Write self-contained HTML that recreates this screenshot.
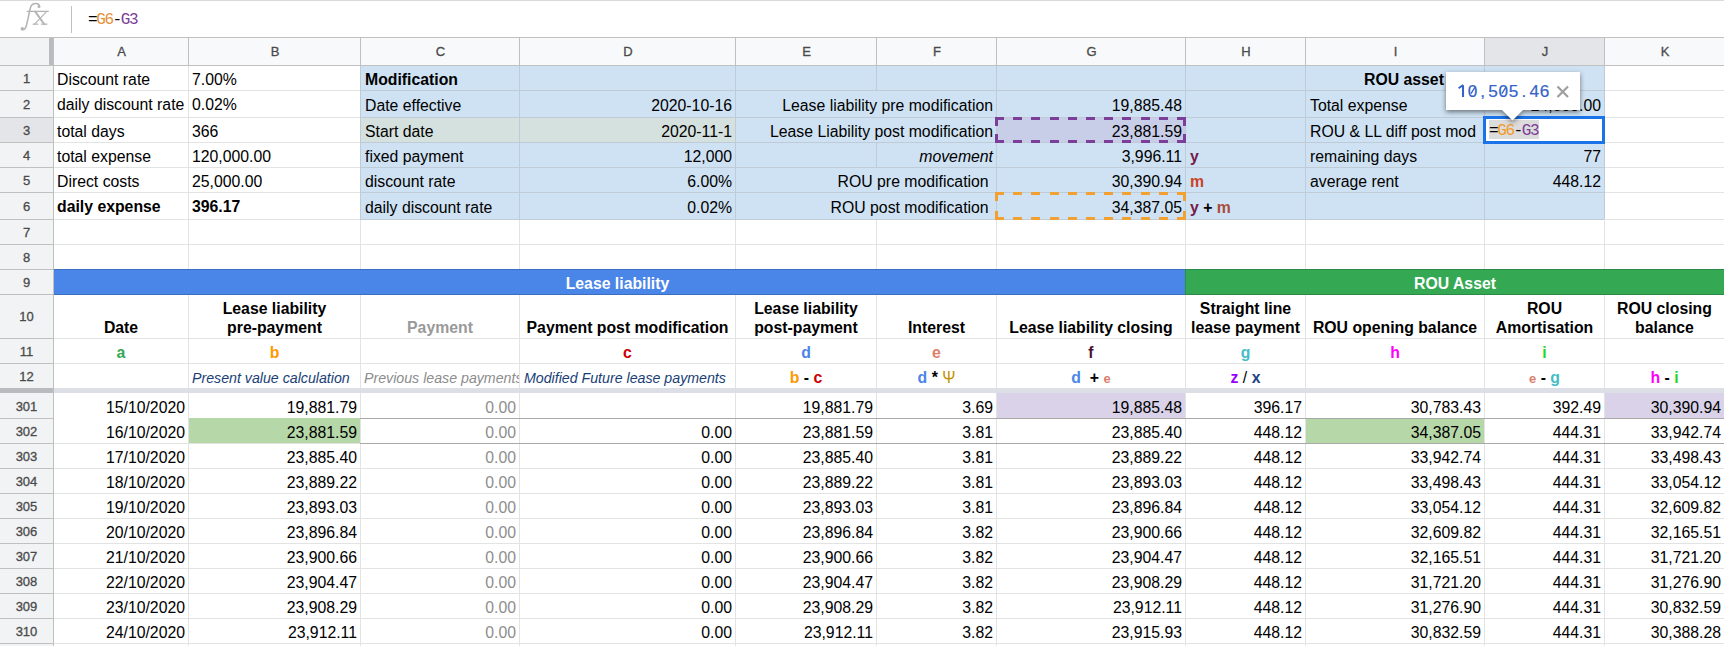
<!DOCTYPE html>
<html><head><meta charset="utf-8"><style>
html,body{margin:0;padding:0;background:#fff;width:1724px;height:646px;overflow:hidden;position:relative}
.a{position:absolute}
.t{position:absolute;font-family:"Liberation Sans",sans-serif;font-size:15.8px;line-height:20px;height:20px;white-space:nowrap;color:#000}
.h{position:absolute;font-family:"Liberation Sans",sans-serif;font-size:13px;color:#4a4a4a;-webkit-text-stroke:0.3px #4a4a4a}
.mono{font-family:"Liberation Mono",monospace;white-space:nowrap}
</style></head><body>
<div class="a" style="left:360px;top:65px;width:1244px;height:154px;background:#cfe2f3;"></div>
<div class="a" style="left:360px;top:117px;width:375px;height:25px;background:#d5e1de;"></div>
<div class="a" style="left:53px;top:269px;width:1132px;height:25px;background:#4a86e8;"></div>
<div class="a" style="left:1185px;top:269px;width:539px;height:25px;background:#34a853;"></div>
<div class="a" style="left:188px;top:418px;width:172px;height:25px;background:#b6d7a8;"></div>
<div class="a" style="left:1305px;top:418px;width:179px;height:25px;background:#b6d7a8;"></div>
<div class="a" style="left:996px;top:393px;width:189px;height:25px;background:#d9d2e9;"></div>
<div class="a" style="left:1604px;top:393px;width:120px;height:25px;background:#d9d2e9;"></div>
<div class="a" style="left:996px;top:117px;width:189px;height:25px;background:#c8cde8;"></div>
<div class="a" style="left:53px;top:90px;width:1671px;height:1px;background:#e2e3e3;"></div>
<div class="a" style="left:53px;top:117px;width:1671px;height:1px;background:#e2e3e3;"></div>
<div class="a" style="left:53px;top:142px;width:1671px;height:1px;background:#e2e3e3;"></div>
<div class="a" style="left:53px;top:167px;width:1671px;height:1px;background:#e2e3e3;"></div>
<div class="a" style="left:53px;top:192px;width:1671px;height:1px;background:#e2e3e3;"></div>
<div class="a" style="left:53px;top:219px;width:1671px;height:1px;background:#e2e3e3;"></div>
<div class="a" style="left:53px;top:244px;width:1671px;height:1px;background:#e2e3e3;"></div>
<div class="a" style="left:53px;top:269px;width:1671px;height:1px;background:#e2e3e3;"></div>
<div class="a" style="left:53px;top:294px;width:1671px;height:1px;background:#e2e3e3;"></div>
<div class="a" style="left:53px;top:338px;width:1671px;height:1px;background:#e2e3e3;"></div>
<div class="a" style="left:53px;top:363px;width:1671px;height:1px;background:#e2e3e3;"></div>
<div class="a" style="left:53px;top:443px;width:1671px;height:1px;background:#e2e3e3;"></div>
<div class="a" style="left:53px;top:468px;width:1671px;height:1px;background:#e2e3e3;"></div>
<div class="a" style="left:53px;top:493px;width:1671px;height:1px;background:#e2e3e3;"></div>
<div class="a" style="left:53px;top:518px;width:1671px;height:1px;background:#e2e3e3;"></div>
<div class="a" style="left:53px;top:543px;width:1671px;height:1px;background:#e2e3e3;"></div>
<div class="a" style="left:53px;top:568px;width:1671px;height:1px;background:#e2e3e3;"></div>
<div class="a" style="left:53px;top:593px;width:1671px;height:1px;background:#e2e3e3;"></div>
<div class="a" style="left:53px;top:618px;width:1671px;height:1px;background:#e2e3e3;"></div>
<div class="a" style="left:53px;top:643px;width:1671px;height:1px;background:#e2e3e3;"></div>
<div class="a" style="left:188px;top:65px;width:1px;height:581px;background:#e2e3e3;"></div>
<div class="a" style="left:360px;top:219px;width:1px;height:427px;background:#e2e3e3;"></div>
<div class="a" style="left:519px;top:219px;width:1px;height:427px;background:#e2e3e3;"></div>
<div class="a" style="left:735px;top:219px;width:1px;height:427px;background:#e2e3e3;"></div>
<div class="a" style="left:876px;top:219px;width:1px;height:427px;background:#e2e3e3;"></div>
<div class="a" style="left:996px;top:219px;width:1px;height:427px;background:#e2e3e3;"></div>
<div class="a" style="left:1185px;top:219px;width:1px;height:427px;background:#e2e3e3;"></div>
<div class="a" style="left:1305px;top:219px;width:1px;height:427px;background:#e2e3e3;"></div>
<div class="a" style="left:1484px;top:219px;width:1px;height:427px;background:#e2e3e3;"></div>
<div class="a" style="left:1604px;top:219px;width:1px;height:427px;background:#e2e3e3;"></div>
<div class="a" style="left:360px;top:90px;width:1244px;height:1px;background:#bfccd8;"></div>
<div class="a" style="left:360px;top:117px;width:1244px;height:1px;background:#bfccd8;"></div>
<div class="a" style="left:360px;top:142px;width:1244px;height:1px;background:#bfccd8;"></div>
<div class="a" style="left:360px;top:167px;width:1244px;height:1px;background:#bfccd8;"></div>
<div class="a" style="left:360px;top:192px;width:1244px;height:1px;background:#bfccd8;"></div>
<div class="a" style="left:360px;top:219px;width:1244px;height:1px;background:#bfccd8;"></div>
<div class="a" style="left:360px;top:65px;width:1px;height:154px;background:#bfccd8;"></div>
<div class="a" style="left:519px;top:65px;width:1px;height:154px;background:#bfccd8;"></div>
<div class="a" style="left:735px;top:65px;width:1px;height:154px;background:#bfccd8;"></div>
<div class="a" style="left:996px;top:65px;width:1px;height:154px;background:#bfccd8;"></div>
<div class="a" style="left:1185px;top:65px;width:1px;height:154px;background:#bfccd8;"></div>
<div class="a" style="left:1305px;top:65px;width:1px;height:154px;background:#bfccd8;"></div>
<div class="a" style="left:1484px;top:65px;width:1px;height:154px;background:#bfccd8;"></div>
<div class="a" style="left:1604px;top:65px;width:1px;height:154px;background:#bfccd8;"></div>
<div class="a" style="left:876px;top:65px;width:1px;height:25px;background:#bfccd8;"></div>
<div class="a" style="left:876px;top:142px;width:1px;height:25px;background:#bfccd8;"></div>
<div class="a" style="left:54px;top:269px;width:1131px;height:26px;background:#4a86e8;"></div>
<div class="a" style="left:1185px;top:269px;width:539px;height:26px;background:#34a853;"></div>
<div class="a" style="left:54px;top:269px;width:1670px;height:1px;background:rgba(0,0,0,.18);"></div>
<div class="a" style="left:54px;top:294px;width:1670px;height:1px;background:rgba(0,0,0,.18);"></div>
<div class="a" style="left:1185px;top:270px;width:1px;height:24px;background:rgba(0,0,0,.15);"></div>
<div class="a" style="left:360px;top:418px;width:1364px;height:1px;background:#a9a9a9;"></div>
<div class="a" style="left:360px;top:443px;width:1364px;height:1px;background:#a9a9a9;"></div>
<div class="a" style="left:53px;top:388px;width:1671px;height:5px;background:#dcdfe6;"></div>
<div class="t" style="left:57px;top:70px;width:128px;text-align:left;">Discount rate</div>
<div class="t" style="left:192px;top:70px;width:165px;text-align:left;">7.00%</div>
<div class="t" style="left:57px;top:95px;width:128px;text-align:left;">daily discount rate</div>
<div class="t" style="left:192px;top:95px;width:165px;text-align:left;">0.02%</div>
<div class="t" style="left:57px;top:122px;width:128px;text-align:left;">total days</div>
<div class="t" style="left:192px;top:122px;width:165px;text-align:left;">366</div>
<div class="t" style="left:57px;top:147px;width:128px;text-align:left;">total expense</div>
<div class="t" style="left:192px;top:147px;width:165px;text-align:left;">120,000.00</div>
<div class="t" style="left:57px;top:172px;width:128px;text-align:left;">Direct costs</div>
<div class="t" style="left:192px;top:172px;width:165px;text-align:left;">25,000.00</div>
<div class="t" style="left:57px;top:197px;width:128px;text-align:left;font-weight:bold">daily expense</div>
<div class="t" style="left:192px;top:197px;width:165px;text-align:left;font-weight:bold">396.17</div>
<div class="t" style="left:365px;top:70px;width:151px;text-align:left;font-weight:bold">Modification</div>
<div class="t" style="left:365px;top:96px;width:151px;text-align:left;">Date effective</div>
<div class="t" style="left:523px;top:96px;width:209px;text-align:right;">2020-10-16</div>
<div class="t" style="left:365px;top:122px;width:151px;text-align:left;">Start date</div>
<div class="t" style="left:523px;top:122px;width:209px;text-align:right;">2020-11-1</div>
<div class="t" style="left:365px;top:147px;width:151px;text-align:left;">fixed payment</div>
<div class="t" style="left:523px;top:147px;width:209px;text-align:right;">12,000</div>
<div class="t" style="left:365px;top:172px;width:151px;text-align:left;">discount rate</div>
<div class="t" style="left:523px;top:172px;width:209px;text-align:right;">6.00%</div>
<div class="t" style="left:365px;top:198px;width:151px;text-align:left;">daily discount rate</div>
<div class="t" style="left:523px;top:198px;width:209px;text-align:right;">0.02%</div>
<div class="t" style="left:739px;top:96px;width:254px;text-align:right;">Lease liability pre modification</div>
<div class="t" style="left:739px;top:122px;width:254px;text-align:right;">Lease Liability post modification</div>
<div class="t" style="left:880px;top:147px;width:113px;text-align:right;font-style:italic">movement</div>
<div class="t" style="left:739px;top:172px;width:254px;text-align:right;">ROU pre modification&nbsp;</div>
<div class="t" style="left:739px;top:198px;width:254px;text-align:right;">ROU post modification&nbsp;</div>
<div class="t" style="left:1000px;top:96px;width:182px;text-align:right;">19,885.48</div>
<div class="t" style="left:1000px;top:122px;width:182px;text-align:right;">23,881.59</div>
<div class="t" style="left:1000px;top:147px;width:182px;text-align:right;">3,996.11</div>
<div class="t" style="left:1000px;top:172px;width:182px;text-align:right;">30,390.94</div>
<div class="t" style="left:1000px;top:198px;width:182px;text-align:right;">34,387.05</div>
<div class="t" style="left:1190px;top:147px;width:112px;text-align:left;"><b style="color:#741b47">y</b></div>
<div class="t" style="left:1190px;top:172px;width:112px;text-align:left;"><b style="color:#cc4125">m</b></div>
<div class="t" style="left:1190px;top:198px;width:112px;text-align:left;"><b style="color:#741b47">y</b> <b>+</b> <b style="color:#a64d3c">m</b></div>
<div class="t" style="left:1364px;top:70px;font-weight:bold">ROU asset</div>
<div class="t" style="left:1310px;top:96px;width:171px;text-align:left;">Total expense</div>
<div class="t" style="left:1488px;top:96px;width:113px;text-align:right;">24,000.00</div>
<div class="t" style="left:1310px;top:122px;width:171px;text-align:left;">ROU &amp; LL diff post mod</div>
<div class="t" style="left:1310px;top:147px;width:171px;text-align:left;">remaining days</div>
<div class="t" style="left:1488px;top:147px;width:113px;text-align:right;">77</div>
<div class="t" style="left:1310px;top:172px;width:171px;text-align:left;">average rent</div>
<div class="t" style="left:1488px;top:172px;width:113px;text-align:right;">448.12</div>
<div class="t" style="left:57px;top:274px;width:1125px;text-align:center;color:#fff;font-weight:bold;margin-left:-2px">Lease liability</div>
<div class="t" style="left:1189px;top:274px;width:532px;text-align:center;color:#fff;font-weight:bold">ROU Asset</div>
<div class="t" style="left:57px;top:318px;width:128px;text-align:center;font-weight:bold;color:#000">Date</div>
<div class="t" style="left:192px;top:299px;width:165px;text-align:center;font-weight:bold;color:#000">Lease liability</div>
<div class="t" style="left:192px;top:318px;width:165px;text-align:center;font-weight:bold;color:#000">pre-payment</div>
<div class="t" style="left:364px;top:318px;width:152px;text-align:center;font-weight:bold;color:#999999">Payment</div>
<div class="t" style="left:523px;top:318px;width:209px;text-align:center;font-weight:bold;color:#000">Payment post modification</div>
<div class="t" style="left:739px;top:299px;width:134px;text-align:center;font-weight:bold;color:#000">Lease liability</div>
<div class="t" style="left:739px;top:318px;width:134px;text-align:center;font-weight:bold;color:#000">post-payment</div>
<div class="t" style="left:880px;top:318px;width:113px;text-align:center;font-weight:bold;color:#000">Interest</div>
<div class="t" style="left:1000px;top:318px;width:182px;text-align:center;font-weight:bold;color:#000">Lease liability closing</div>
<div class="t" style="left:1189px;top:299px;width:113px;text-align:center;font-weight:bold;color:#000">Straight line</div>
<div class="t" style="left:1189px;top:318px;width:113px;text-align:center;font-weight:bold;color:#000">lease payment</div>
<div class="t" style="left:1309px;top:318px;width:172px;text-align:center;font-weight:bold;color:#000">ROU opening balance</div>
<div class="t" style="left:1488px;top:299px;width:113px;text-align:center;font-weight:bold;color:#000">ROU</div>
<div class="t" style="left:1488px;top:318px;width:113px;text-align:center;font-weight:bold;color:#000">Amortisation</div>
<div class="t" style="left:1608px;top:299px;width:113px;text-align:center;font-weight:bold;color:#000">ROU closing</div>
<div class="t" style="left:1608px;top:318px;width:113px;text-align:center;font-weight:bold;color:#000">balance</div>
<div class="t" style="left:57px;top:343px;width:128px;text-align:center;"><b style="color:#34a853">a</b></div>
<div class="t" style="left:192px;top:343px;width:165px;text-align:center;"><b style="color:#ff9900">b</b></div>
<div class="t" style="left:523px;top:343px;width:209px;text-align:center;"><b style="color:#cc0000">c</b></div>
<div class="t" style="left:739px;top:343px;width:134px;text-align:center;"><b style="color:#4a86e8">d</b></div>
<div class="t" style="left:880px;top:343px;width:113px;text-align:center;"><b style="color:#dd7e6b">e</b></div>
<div class="t" style="left:1000px;top:343px;width:182px;text-align:center;"><b style="color:#4c1130">f</b></div>
<div class="t" style="left:1189px;top:343px;width:113px;text-align:center;"><b style="color:#46bdc6">g</b></div>
<div class="t" style="left:1309px;top:343px;width:172px;text-align:center;"><b style="color:#ff00ff">h</b></div>
<div class="t" style="left:1488px;top:343px;width:113px;text-align:center;"><b style="color:#22d822">i</b></div>
<div class="t" style="left:192px;top:368px;width:165px;text-align:left;font-size:14.2px"><i style="color:#183e76">Present value calculation</i></div>
<div class="t" style="left:364px;top:368px;width:155px;overflow:hidden;font-size:14.2px;font-style:italic;color:#8c8c8c">Previous lease payments</div>
<div class="t" style="left:524px;top:368px;width:208px;text-align:left;font-size:14.2px"><i style="color:#183e76">Modified Future lease payments</i></div>
<div class="t" style="left:739px;top:368px;width:134px;text-align:center;"><b style="color:#ff9900">b</b> <b>-</b> <b style="color:#cc0000">c</b></div>
<div class="t" style="left:880px;top:368px;width:113px;text-align:center;"><b style="color:#4a86e8">d</b> <b>*</b> <span style="color:#bf9000">&Psi;</span></div>
<div class="t" style="left:1000px;top:368px;width:182px;text-align:center;"><b style="color:#4a86e8">d</b> &nbsp;<b>+</b> <b style="color:#dd7e6b;font-size:13px">e</b></div>
<div class="t" style="left:1189px;top:368px;width:113px;text-align:center;"><b style="color:#9900ff">z</b> / <b style="color:#1c4587">x</b></div>
<div class="t" style="left:1488px;top:368px;width:113px;text-align:center;"><b style="color:#dd7e6b;font-size:13px">e</b> <b>-</b> <b style="color:#46bdc6">g</b></div>
<div class="t" style="left:1608px;top:368px;width:113px;text-align:center;"><b style="color:#ff00ff">h</b> <b>-</b> <b style="color:#22d822">i</b></div>
<div class="t" style="left:57px;top:398px;width:128px;text-align:right;">15/10/2020</div>
<div class="t" style="left:192px;top:398px;width:165px;text-align:right;">19,881.79</div>
<div class="t" style="left:364px;top:398px;width:152px;text-align:right;color:#8e8e8e">0.00</div>
<div class="t" style="left:739px;top:398px;width:134px;text-align:right;">19,881.79</div>
<div class="t" style="left:880px;top:398px;width:113px;text-align:right;">3.69</div>
<div class="t" style="left:1000px;top:398px;width:182px;text-align:right;">19,885.48</div>
<div class="t" style="left:1189px;top:398px;width:113px;text-align:right;">396.17</div>
<div class="t" style="left:1309px;top:398px;width:172px;text-align:right;">30,783.43</div>
<div class="t" style="left:1488px;top:398px;width:113px;text-align:right;">392.49</div>
<div class="t" style="left:1608px;top:398px;width:113px;text-align:right;">30,390.94</div>
<div class="t" style="left:57px;top:423px;width:128px;text-align:right;">16/10/2020</div>
<div class="t" style="left:192px;top:423px;width:165px;text-align:right;">23,881.59</div>
<div class="t" style="left:364px;top:423px;width:152px;text-align:right;color:#8e8e8e">0.00</div>
<div class="t" style="left:523px;top:423px;width:209px;text-align:right;">0.00</div>
<div class="t" style="left:739px;top:423px;width:134px;text-align:right;">23,881.59</div>
<div class="t" style="left:880px;top:423px;width:113px;text-align:right;">3.81</div>
<div class="t" style="left:1000px;top:423px;width:182px;text-align:right;">23,885.40</div>
<div class="t" style="left:1189px;top:423px;width:113px;text-align:right;">448.12</div>
<div class="t" style="left:1309px;top:423px;width:172px;text-align:right;">34,387.05</div>
<div class="t" style="left:1488px;top:423px;width:113px;text-align:right;">444.31</div>
<div class="t" style="left:1608px;top:423px;width:113px;text-align:right;">33,942.74</div>
<div class="t" style="left:57px;top:448px;width:128px;text-align:right;">17/10/2020</div>
<div class="t" style="left:192px;top:448px;width:165px;text-align:right;">23,885.40</div>
<div class="t" style="left:364px;top:448px;width:152px;text-align:right;color:#8e8e8e">0.00</div>
<div class="t" style="left:523px;top:448px;width:209px;text-align:right;">0.00</div>
<div class="t" style="left:739px;top:448px;width:134px;text-align:right;">23,885.40</div>
<div class="t" style="left:880px;top:448px;width:113px;text-align:right;">3.81</div>
<div class="t" style="left:1000px;top:448px;width:182px;text-align:right;">23,889.22</div>
<div class="t" style="left:1189px;top:448px;width:113px;text-align:right;">448.12</div>
<div class="t" style="left:1309px;top:448px;width:172px;text-align:right;">33,942.74</div>
<div class="t" style="left:1488px;top:448px;width:113px;text-align:right;">444.31</div>
<div class="t" style="left:1608px;top:448px;width:113px;text-align:right;">33,498.43</div>
<div class="t" style="left:57px;top:473px;width:128px;text-align:right;">18/10/2020</div>
<div class="t" style="left:192px;top:473px;width:165px;text-align:right;">23,889.22</div>
<div class="t" style="left:364px;top:473px;width:152px;text-align:right;color:#8e8e8e">0.00</div>
<div class="t" style="left:523px;top:473px;width:209px;text-align:right;">0.00</div>
<div class="t" style="left:739px;top:473px;width:134px;text-align:right;">23,889.22</div>
<div class="t" style="left:880px;top:473px;width:113px;text-align:right;">3.81</div>
<div class="t" style="left:1000px;top:473px;width:182px;text-align:right;">23,893.03</div>
<div class="t" style="left:1189px;top:473px;width:113px;text-align:right;">448.12</div>
<div class="t" style="left:1309px;top:473px;width:172px;text-align:right;">33,498.43</div>
<div class="t" style="left:1488px;top:473px;width:113px;text-align:right;">444.31</div>
<div class="t" style="left:1608px;top:473px;width:113px;text-align:right;">33,054.12</div>
<div class="t" style="left:57px;top:498px;width:128px;text-align:right;">19/10/2020</div>
<div class="t" style="left:192px;top:498px;width:165px;text-align:right;">23,893.03</div>
<div class="t" style="left:364px;top:498px;width:152px;text-align:right;color:#8e8e8e">0.00</div>
<div class="t" style="left:523px;top:498px;width:209px;text-align:right;">0.00</div>
<div class="t" style="left:739px;top:498px;width:134px;text-align:right;">23,893.03</div>
<div class="t" style="left:880px;top:498px;width:113px;text-align:right;">3.81</div>
<div class="t" style="left:1000px;top:498px;width:182px;text-align:right;">23,896.84</div>
<div class="t" style="left:1189px;top:498px;width:113px;text-align:right;">448.12</div>
<div class="t" style="left:1309px;top:498px;width:172px;text-align:right;">33,054.12</div>
<div class="t" style="left:1488px;top:498px;width:113px;text-align:right;">444.31</div>
<div class="t" style="left:1608px;top:498px;width:113px;text-align:right;">32,609.82</div>
<div class="t" style="left:57px;top:523px;width:128px;text-align:right;">20/10/2020</div>
<div class="t" style="left:192px;top:523px;width:165px;text-align:right;">23,896.84</div>
<div class="t" style="left:364px;top:523px;width:152px;text-align:right;color:#8e8e8e">0.00</div>
<div class="t" style="left:523px;top:523px;width:209px;text-align:right;">0.00</div>
<div class="t" style="left:739px;top:523px;width:134px;text-align:right;">23,896.84</div>
<div class="t" style="left:880px;top:523px;width:113px;text-align:right;">3.82</div>
<div class="t" style="left:1000px;top:523px;width:182px;text-align:right;">23,900.66</div>
<div class="t" style="left:1189px;top:523px;width:113px;text-align:right;">448.12</div>
<div class="t" style="left:1309px;top:523px;width:172px;text-align:right;">32,609.82</div>
<div class="t" style="left:1488px;top:523px;width:113px;text-align:right;">444.31</div>
<div class="t" style="left:1608px;top:523px;width:113px;text-align:right;">32,165.51</div>
<div class="t" style="left:57px;top:548px;width:128px;text-align:right;">21/10/2020</div>
<div class="t" style="left:192px;top:548px;width:165px;text-align:right;">23,900.66</div>
<div class="t" style="left:364px;top:548px;width:152px;text-align:right;color:#8e8e8e">0.00</div>
<div class="t" style="left:523px;top:548px;width:209px;text-align:right;">0.00</div>
<div class="t" style="left:739px;top:548px;width:134px;text-align:right;">23,900.66</div>
<div class="t" style="left:880px;top:548px;width:113px;text-align:right;">3.82</div>
<div class="t" style="left:1000px;top:548px;width:182px;text-align:right;">23,904.47</div>
<div class="t" style="left:1189px;top:548px;width:113px;text-align:right;">448.12</div>
<div class="t" style="left:1309px;top:548px;width:172px;text-align:right;">32,165.51</div>
<div class="t" style="left:1488px;top:548px;width:113px;text-align:right;">444.31</div>
<div class="t" style="left:1608px;top:548px;width:113px;text-align:right;">31,721.20</div>
<div class="t" style="left:57px;top:573px;width:128px;text-align:right;">22/10/2020</div>
<div class="t" style="left:192px;top:573px;width:165px;text-align:right;">23,904.47</div>
<div class="t" style="left:364px;top:573px;width:152px;text-align:right;color:#8e8e8e">0.00</div>
<div class="t" style="left:523px;top:573px;width:209px;text-align:right;">0.00</div>
<div class="t" style="left:739px;top:573px;width:134px;text-align:right;">23,904.47</div>
<div class="t" style="left:880px;top:573px;width:113px;text-align:right;">3.82</div>
<div class="t" style="left:1000px;top:573px;width:182px;text-align:right;">23,908.29</div>
<div class="t" style="left:1189px;top:573px;width:113px;text-align:right;">448.12</div>
<div class="t" style="left:1309px;top:573px;width:172px;text-align:right;">31,721.20</div>
<div class="t" style="left:1488px;top:573px;width:113px;text-align:right;">444.31</div>
<div class="t" style="left:1608px;top:573px;width:113px;text-align:right;">31,276.90</div>
<div class="t" style="left:57px;top:598px;width:128px;text-align:right;">23/10/2020</div>
<div class="t" style="left:192px;top:598px;width:165px;text-align:right;">23,908.29</div>
<div class="t" style="left:364px;top:598px;width:152px;text-align:right;color:#8e8e8e">0.00</div>
<div class="t" style="left:523px;top:598px;width:209px;text-align:right;">0.00</div>
<div class="t" style="left:739px;top:598px;width:134px;text-align:right;">23,908.29</div>
<div class="t" style="left:880px;top:598px;width:113px;text-align:right;">3.82</div>
<div class="t" style="left:1000px;top:598px;width:182px;text-align:right;">23,912.11</div>
<div class="t" style="left:1189px;top:598px;width:113px;text-align:right;">448.12</div>
<div class="t" style="left:1309px;top:598px;width:172px;text-align:right;">31,276.90</div>
<div class="t" style="left:1488px;top:598px;width:113px;text-align:right;">444.31</div>
<div class="t" style="left:1608px;top:598px;width:113px;text-align:right;">30,832.59</div>
<div class="t" style="left:57px;top:623px;width:128px;text-align:right;">24/10/2020</div>
<div class="t" style="left:192px;top:623px;width:165px;text-align:right;">23,912.11</div>
<div class="t" style="left:364px;top:623px;width:152px;text-align:right;color:#8e8e8e">0.00</div>
<div class="t" style="left:523px;top:623px;width:209px;text-align:right;">0.00</div>
<div class="t" style="left:739px;top:623px;width:134px;text-align:right;">23,912.11</div>
<div class="t" style="left:880px;top:623px;width:113px;text-align:right;">3.82</div>
<div class="t" style="left:1000px;top:623px;width:182px;text-align:right;">23,915.93</div>
<div class="t" style="left:1189px;top:623px;width:113px;text-align:right;">448.12</div>
<div class="t" style="left:1309px;top:623px;width:172px;text-align:right;">30,832.59</div>
<div class="t" style="left:1488px;top:623px;width:113px;text-align:right;">444.31</div>
<div class="t" style="left:1608px;top:623px;width:113px;text-align:right;">30,388.28</div>
<div class="a" style="left:995px;top:117px;width:9px;height:3px;background:#7b3f9a;"></div>
<div class="a" style="left:995px;top:140px;width:9px;height:3px;background:#7b3f9a;"></div>
<div class="a" style="left:1013px;top:117px;width:9px;height:3px;background:#7b3f9a;"></div>
<div class="a" style="left:1013px;top:140px;width:9px;height:3px;background:#7b3f9a;"></div>
<div class="a" style="left:1031px;top:117px;width:9px;height:3px;background:#7b3f9a;"></div>
<div class="a" style="left:1031px;top:140px;width:9px;height:3px;background:#7b3f9a;"></div>
<div class="a" style="left:1050px;top:117px;width:9px;height:3px;background:#7b3f9a;"></div>
<div class="a" style="left:1050px;top:140px;width:9px;height:3px;background:#7b3f9a;"></div>
<div class="a" style="left:1068px;top:117px;width:9px;height:3px;background:#7b3f9a;"></div>
<div class="a" style="left:1068px;top:140px;width:9px;height:3px;background:#7b3f9a;"></div>
<div class="a" style="left:1086px;top:117px;width:9px;height:3px;background:#7b3f9a;"></div>
<div class="a" style="left:1086px;top:140px;width:9px;height:3px;background:#7b3f9a;"></div>
<div class="a" style="left:1104px;top:117px;width:9px;height:3px;background:#7b3f9a;"></div>
<div class="a" style="left:1104px;top:140px;width:9px;height:3px;background:#7b3f9a;"></div>
<div class="a" style="left:1122px;top:117px;width:9px;height:3px;background:#7b3f9a;"></div>
<div class="a" style="left:1122px;top:140px;width:9px;height:3px;background:#7b3f9a;"></div>
<div class="a" style="left:1141px;top:117px;width:9px;height:3px;background:#7b3f9a;"></div>
<div class="a" style="left:1141px;top:140px;width:9px;height:3px;background:#7b3f9a;"></div>
<div class="a" style="left:1159px;top:117px;width:9px;height:3px;background:#7b3f9a;"></div>
<div class="a" style="left:1159px;top:140px;width:9px;height:3px;background:#7b3f9a;"></div>
<div class="a" style="left:1177px;top:117px;width:9px;height:3px;background:#7b3f9a;"></div>
<div class="a" style="left:1177px;top:140px;width:9px;height:3px;background:#7b3f9a;"></div>
<div class="a" style="left:995px;top:117px;width:3px;height:9px;background:#7b3f9a;"></div>
<div class="a" style="left:995px;top:134px;width:3px;height:9px;background:#7b3f9a;"></div>
<div class="a" style="left:1183px;top:117px;width:3px;height:9px;background:#7b3f9a;"></div>
<div class="a" style="left:1183px;top:134px;width:3px;height:9px;background:#7b3f9a;"></div>
<div class="a" style="left:995px;top:192px;width:9px;height:3px;background:#f1a032;"></div>
<div class="a" style="left:995px;top:217px;width:9px;height:3px;background:#f1a032;"></div>
<div class="a" style="left:1013px;top:192px;width:9px;height:3px;background:#f1a032;"></div>
<div class="a" style="left:1013px;top:217px;width:9px;height:3px;background:#f1a032;"></div>
<div class="a" style="left:1031px;top:192px;width:9px;height:3px;background:#f1a032;"></div>
<div class="a" style="left:1031px;top:217px;width:9px;height:3px;background:#f1a032;"></div>
<div class="a" style="left:1050px;top:192px;width:9px;height:3px;background:#f1a032;"></div>
<div class="a" style="left:1050px;top:217px;width:9px;height:3px;background:#f1a032;"></div>
<div class="a" style="left:1068px;top:192px;width:9px;height:3px;background:#f1a032;"></div>
<div class="a" style="left:1068px;top:217px;width:9px;height:3px;background:#f1a032;"></div>
<div class="a" style="left:1086px;top:192px;width:9px;height:3px;background:#f1a032;"></div>
<div class="a" style="left:1086px;top:217px;width:9px;height:3px;background:#f1a032;"></div>
<div class="a" style="left:1104px;top:192px;width:9px;height:3px;background:#f1a032;"></div>
<div class="a" style="left:1104px;top:217px;width:9px;height:3px;background:#f1a032;"></div>
<div class="a" style="left:1122px;top:192px;width:9px;height:3px;background:#f1a032;"></div>
<div class="a" style="left:1122px;top:217px;width:9px;height:3px;background:#f1a032;"></div>
<div class="a" style="left:1141px;top:192px;width:9px;height:3px;background:#f1a032;"></div>
<div class="a" style="left:1141px;top:217px;width:9px;height:3px;background:#f1a032;"></div>
<div class="a" style="left:1159px;top:192px;width:9px;height:3px;background:#f1a032;"></div>
<div class="a" style="left:1159px;top:217px;width:9px;height:3px;background:#f1a032;"></div>
<div class="a" style="left:1177px;top:192px;width:9px;height:3px;background:#f1a032;"></div>
<div class="a" style="left:1177px;top:217px;width:9px;height:3px;background:#f1a032;"></div>
<div class="a" style="left:995px;top:192px;width:3px;height:9px;background:#f1a032;"></div>
<div class="a" style="left:995px;top:211px;width:3px;height:9px;background:#f1a032;"></div>
<div class="a" style="left:1183px;top:192px;width:3px;height:9px;background:#f1a032;"></div>
<div class="a" style="left:1183px;top:211px;width:3px;height:9px;background:#f1a032;"></div>
<div class="a" style="left:0px;top:37px;width:1724px;height:1px;background:#c0c0c0;"></div>
<div class="a" style="left:0px;top:38px;width:1724px;height:27px;background:#f8f9fa;"></div>
<div class="a" style="left:0px;top:65px;width:1724px;height:1px;background:#c0c0c0;"></div>
<div class="a" style="left:0px;top:66px;width:53px;height:580px;background:#f1f3f4;"></div>
<div class="a" style="left:0px;top:38px;width:49px;height:27px;background:#f1f3f4;"></div>
<div class="a" style="left:53px;top:38px;width:1px;height:608px;background:#c0c0c0;"></div>
<div class="a" style="left:1485px;top:38px;width:119px;height:27px;background:#e3e5e8;"></div>
<div class="a" style="left:0px;top:117px;width:53px;height:25px;background:#e3e5e8;"></div>
<div class="a" style="left:188px;top:38px;width:1px;height:27px;background:#c0c0c0;"></div>
<div class="a" style="left:360px;top:38px;width:1px;height:27px;background:#c0c0c0;"></div>
<div class="a" style="left:519px;top:38px;width:1px;height:27px;background:#c0c0c0;"></div>
<div class="a" style="left:735px;top:38px;width:1px;height:27px;background:#c0c0c0;"></div>
<div class="a" style="left:876px;top:38px;width:1px;height:27px;background:#c0c0c0;"></div>
<div class="a" style="left:996px;top:38px;width:1px;height:27px;background:#c0c0c0;"></div>
<div class="a" style="left:1185px;top:38px;width:1px;height:27px;background:#c0c0c0;"></div>
<div class="a" style="left:1305px;top:38px;width:1px;height:27px;background:#c0c0c0;"></div>
<div class="a" style="left:1484px;top:38px;width:1px;height:27px;background:#c0c0c0;"></div>
<div class="a" style="left:1604px;top:38px;width:1px;height:27px;background:#c0c0c0;"></div>
<div class="a" style="left:0px;top:90px;width:53px;height:1px;background:#c0c0c0;"></div>
<div class="a" style="left:0px;top:117px;width:53px;height:1px;background:#c0c0c0;"></div>
<div class="a" style="left:0px;top:142px;width:53px;height:1px;background:#c0c0c0;"></div>
<div class="a" style="left:0px;top:167px;width:53px;height:1px;background:#c0c0c0;"></div>
<div class="a" style="left:0px;top:192px;width:53px;height:1px;background:#c0c0c0;"></div>
<div class="a" style="left:0px;top:219px;width:53px;height:1px;background:#c0c0c0;"></div>
<div class="a" style="left:0px;top:244px;width:53px;height:1px;background:#c0c0c0;"></div>
<div class="a" style="left:0px;top:269px;width:53px;height:1px;background:#c0c0c0;"></div>
<div class="a" style="left:0px;top:294px;width:53px;height:1px;background:#c0c0c0;"></div>
<div class="a" style="left:0px;top:338px;width:53px;height:1px;background:#c0c0c0;"></div>
<div class="a" style="left:0px;top:363px;width:53px;height:1px;background:#c0c0c0;"></div>
<div class="a" style="left:0px;top:443px;width:53px;height:1px;background:#c0c0c0;"></div>
<div class="a" style="left:0px;top:468px;width:53px;height:1px;background:#c0c0c0;"></div>
<div class="a" style="left:0px;top:493px;width:53px;height:1px;background:#c0c0c0;"></div>
<div class="a" style="left:0px;top:518px;width:53px;height:1px;background:#c0c0c0;"></div>
<div class="a" style="left:0px;top:543px;width:53px;height:1px;background:#c0c0c0;"></div>
<div class="a" style="left:0px;top:568px;width:53px;height:1px;background:#c0c0c0;"></div>
<div class="a" style="left:0px;top:593px;width:53px;height:1px;background:#c0c0c0;"></div>
<div class="a" style="left:0px;top:618px;width:53px;height:1px;background:#c0c0c0;"></div>
<div class="a" style="left:0px;top:643px;width:53px;height:1px;background:#c0c0c0;"></div>
<div class="a" style="left:0px;top:418px;width:53px;height:1px;background:#c0c0c0;"></div>
<div class="a" style="left:49px;top:38px;width:4px;height:27px;background:#b9bbbe;"></div>
<div class="a" style="left:0px;top:388px;width:53px;height:5px;background:#b9bbbe;"></div>
<div class="h" style="left:54px;top:38px;width:135px;height:27px;line-height:27px;text-align:center">A</div>
<div class="h" style="left:189px;top:38px;width:172px;height:27px;line-height:27px;text-align:center">B</div>
<div class="h" style="left:361px;top:38px;width:159px;height:27px;line-height:27px;text-align:center">C</div>
<div class="h" style="left:520px;top:38px;width:216px;height:27px;line-height:27px;text-align:center">D</div>
<div class="h" style="left:736px;top:38px;width:141px;height:27px;line-height:27px;text-align:center">E</div>
<div class="h" style="left:877px;top:38px;width:120px;height:27px;line-height:27px;text-align:center">F</div>
<div class="h" style="left:997px;top:38px;width:189px;height:27px;line-height:27px;text-align:center">G</div>
<div class="h" style="left:1186px;top:38px;width:120px;height:27px;line-height:27px;text-align:center">H</div>
<div class="h" style="left:1306px;top:38px;width:179px;height:27px;line-height:27px;text-align:center">I</div>
<div class="h" style="left:1485px;top:38px;width:120px;height:27px;line-height:27px;text-align:center">J</div>
<div class="h" style="left:1605px;top:38px;width:120px;height:27px;line-height:27px;text-align:center">K</div>
<div class="h" style="left:0px;top:66px;width:53px;height:25px;line-height:25px;text-align:center">1</div>
<div class="h" style="left:0px;top:91px;width:53px;height:27px;line-height:27px;text-align:center">2</div>
<div class="h" style="left:0px;top:118px;width:53px;height:25px;line-height:25px;text-align:center">3</div>
<div class="h" style="left:0px;top:143px;width:53px;height:25px;line-height:25px;text-align:center">4</div>
<div class="h" style="left:0px;top:168px;width:53px;height:25px;line-height:25px;text-align:center">5</div>
<div class="h" style="left:0px;top:193px;width:53px;height:27px;line-height:27px;text-align:center">6</div>
<div class="h" style="left:0px;top:220px;width:53px;height:25px;line-height:25px;text-align:center">7</div>
<div class="h" style="left:0px;top:245px;width:53px;height:25px;line-height:25px;text-align:center">8</div>
<div class="h" style="left:0px;top:270px;width:53px;height:25px;line-height:25px;text-align:center">9</div>
<div class="h" style="left:0px;top:295px;width:53px;height:44px;line-height:44px;text-align:center">10</div>
<div class="h" style="left:0px;top:339px;width:53px;height:25px;line-height:25px;text-align:center">11</div>
<div class="h" style="left:0px;top:364px;width:53px;height:25px;line-height:25px;text-align:center">12</div>
<div class="h" style="left:0px;top:394px;width:53px;height:25px;line-height:25px;text-align:center">301</div>
<div class="h" style="left:0px;top:419px;width:53px;height:25px;line-height:25px;text-align:center">302</div>
<div class="h" style="left:0px;top:444px;width:53px;height:25px;line-height:25px;text-align:center">303</div>
<div class="h" style="left:0px;top:469px;width:53px;height:25px;line-height:25px;text-align:center">304</div>
<div class="h" style="left:0px;top:494px;width:53px;height:25px;line-height:25px;text-align:center">305</div>
<div class="h" style="left:0px;top:519px;width:53px;height:25px;line-height:25px;text-align:center">306</div>
<div class="h" style="left:0px;top:544px;width:53px;height:25px;line-height:25px;text-align:center">307</div>
<div class="h" style="left:0px;top:569px;width:53px;height:25px;line-height:25px;text-align:center">308</div>
<div class="h" style="left:0px;top:594px;width:53px;height:25px;line-height:25px;text-align:center">309</div>
<div class="h" style="left:0px;top:619px;width:53px;height:25px;line-height:25px;text-align:center">310</div>
<div class="a" style="left:1483px;top:116px;width:116px;height:22px;border:3px solid #1a73e8;background:#fff"></div>
<div class="a mono" style="left:1489px;top:120px;height:19px;line-height:23px;background:#dcdcdc;font-size:16px;letter-spacing:-1.4px;padding:0 1px 0 0"><span>=</span><span style="color:#f09b2c">G6</span><span>-</span><span style="color:#7d3c98">G3</span></div>
<div class="a" style="left:1446px;top:72px;width:134px;height:50px;filter:drop-shadow(0 2px 2.5px rgba(0,0,0,.5))"><div class="a" style="left:0;top:0;width:134px;height:38px;background:#fff"></div><svg class="a" style="left:55px;top:37px" width="24" height="14"><path d="M0 0 L11.5 11.5 L23 0 Z" fill="#fff"/></svg></div>
<svg class="a" style="left:1452px;top:76px" width="60" height="28"><g stroke="#3563c9" fill="none"><path d="M11,9.2 L11,21" stroke-width="2.1"/><path d="M6.6,12.2 L11.2,9" stroke-width="1.9"/><path d="M19,17.6 L23,11.2" stroke-width="1.3"/><path d="M49.9,17.6 L53.9,11.2" stroke-width="1.3"/></g></svg>
<div class="a" style="left:1457px;top:78px;line-height:26px;font-family:'Liberation Sans',sans-serif;font-size:17.2px;color:#3563c9;white-space:nowrap;-webkit-text-stroke:0.2px #3563c9"><span style="display:inline-block;width:10.3px;text-align:center">&nbsp;</span><span style="display:inline-block;width:10.3px;text-align:center">0</span><span style="display:inline-block;width:10.3px;text-align:center">,</span><span style="display:inline-block;width:10.3px;text-align:center">5</span><span style="display:inline-block;width:10.3px;text-align:center">0</span><span style="display:inline-block;width:10.3px;text-align:center">5</span><span style="display:inline-block;width:10.3px;text-align:center">.</span><span style="display:inline-block;width:10.3px;text-align:center">4</span><span style="display:inline-block;width:10.3px;text-align:center">6</span></div>
<div class="a" style="left:1555px;top:82px;width:16px;height:16px;"><svg width="16" height="16"><path d="M2.5 4.5 L13 15 M13 4.5 L2.5 15" stroke="#9e9e9e" stroke-width="2.2"/></svg></div>
<div class="a" style="left:0px;top:0px;width:1724px;height:1px;background:#dadada;"></div>
<svg class="a" style="left:0;top:0" width="60" height="36"><g fill="none" stroke="#b4b4b4" stroke-linecap="round"><path d="M22,29.6 C24.5,30.2 26,27.8 26.8,24 L30.2,8.5 C31,5.2 33,3.6 35.8,3.6 C37.8,3.6 39.2,4.6 39.3,6" stroke-width="1.5"/><path d="M27.2,11.4 L48.3,11.4" stroke-width="1.3"/><path d="M35.2,11.6 L44.3,24.2" stroke-width="1.9"/><path d="M46.3,11.8 L34.6,24.2" stroke-width="1.1"/><path d="M33.2,24.2 L37.8,24.2 M41.5,24.2 L47,24.2" stroke-width="1.2"/></g><circle cx="22.3" cy="28.8" r="1.7" fill="#b4b4b4"/><circle cx="39" cy="6.4" r="1.5" fill="#b4b4b4"/></svg>
<div class="a" style="left:71px;top:6px;width:1px;height:27px;background:#c0c0c0;"></div>
<div class="a mono" style="left:88px;top:9px;line-height:22px;font-size:16px;letter-spacing:-1.4px"><span>=</span><span style="color:#e69138">G6</span><span>-</span><span style="color:#7d3c98">G3</span></div>
</body></html>
